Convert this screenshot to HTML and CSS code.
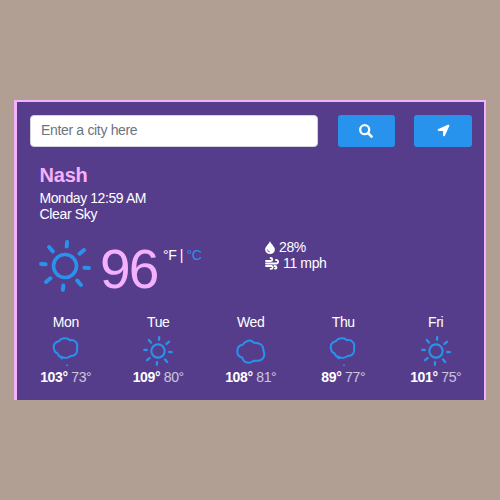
FILE: index.html
```html
<!DOCTYPE html>
<html lang="en">
<head>
<meta charset="utf-8">
<title>Weather</title>
<link rel="stylesheet" href="styles.css">
</head>
<body>
<svg width="0" height="0" class="defs">
  <symbol id="sun" viewBox="-26 -26 52 52">
    <g fill="none" stroke="currentColor" stroke-linecap="round" transform="rotate(5)">
      <circle r="11.500" stroke-width="3.600"/>
      <path stroke-width="4" d="M0-19.500V-24M0 19.500V24M19.500 0H24M-19.500 0H-24M13.500-13.500L17.500-17.500M13.500 13.500L17.500 17.500M-13.500 13.500L-17.500 17.500M-13.500-13.500L-17.500-17.500"/>
    </g>
  </symbol>
  <symbol id="rain" viewBox="0 0 30 30">
    <path fill="none" stroke="currentColor" stroke-width="2" stroke-linejoin="round" d="M2.700 11C2.700 8.500 4.300 6.200 7.700 5.300C10 2.300 16 .8 19 4.300C23.300 3.300 27.500 7 26 12C27 16 25 20 19.700 20C17.500 22 13.500 22.300 10.700 21C8.500 20.900 7 19 6.600 17.500C4 16.300 2.700 14 2.700 11Z"/>
    <path fill="currentColor" d="M8 20L12.500 21.700L10.500 23.700ZM16 27.800L17.200 30H14.800Z"/>
  </symbol>
  <symbol id="cloud" viewBox="0 0 30 30">
    <path fill="none" stroke="currentColor" stroke-width="2" stroke-linejoin="round" d="M1.300 15.300C1.300 12 3.300 9.200 6.700 8.700C9.500 4.500 14.500 3 17.700 6.700C23.500 6.200 28 9.300 27.300 14.300C29.700 19 27.500 24.700 21.700 24.700C20.500 25 19 24.400 17.300 25C14 27.300 10.500 27 8.300 25.300C6.900 24.600 7.300 22.500 5.800 21.400C2.500 20.800 1.300 18 1.300 15.300Z"/>
  </symbol>
</svg>
<main class="card">
  <form class="search">
    <input class="city-input" type="text" placeholder="Enter a city here" aria-label="City">
    <button class="btn" type="button" aria-label="Search"><svg width="14" height="14" viewBox="0 0 14 14"><circle cx="5.700" cy="5.700" r="4.500" fill="none" stroke="#fff" stroke-width="2.300"/><path d="M9 9L12.600 12.600" stroke="#fff" stroke-width="2.600" stroke-linecap="round"/></svg></button>
    <button class="btn btn-location" type="button" aria-label="Current location"><svg width="13" height="13" viewBox="0 0 13 13"><path fill="#fff" d="M11 .8Q12.700.3 12.300 1.900L8 11.600Q7.300 12.900 6.100 11.700V7H1.400Q-.2 5.800 1.300 5Z"/></svg></button>
  </form>
  <section class="summary">
    <h1>Nash</h1>
    <div class="date">Monday 12:59 AM</div>
    <div>Clear Sky</div>
  </section>
  <section class="current">
    <svg class="main-icon"><use href="#sun"/></svg>
    <span class="temp">96</span>
    <span class="units">°F | <span class="unit-link">°C</span></span>
    <div class="details">
      <div><svg width="10" height="13" viewBox="0 0 10 13"><path fill="#fff" d="M5 0C5.500 2.700 9.900 5.500 9.900 8.400A4.900 4.600 0 0 1 .1 8.400C.1 5.500 4.500 2.700 5 0Z"/><path d="M2.300 8.500Q2.600 10.700 4.900 11" fill="none" stroke="#563d8c" stroke-width=".8"/></svg><span>28%</span></div>
      <div><svg width="14" height="13" viewBox="0 0 14 13"><path fill="none" stroke="#fff" stroke-width="1.800" stroke-linecap="round" d="M1 4H5.500C8 4 7.700 1 5.600 1M1 6.500H11C14 6.500 13.600 2.700 10.900 3M1 9H6C8.500 9 8 12.200 5.600 11.900M9.500 9C12 9 12 11.800 10 11.600"/></svg><span>11 mph</span></div>
    </div>
  </section>
  <section class="forecast">
    <div class="day"><div>Mon</div><svg><use href="#rain"/></svg><div><b>103°</b> <span class="low">73°</span></div></div>
    <div class="day"><div>Tue</div><svg><use href="#sun"/></svg><div><b>109°</b> <span class="low">80°</span></div></div>
    <div class="day"><div>Wed</div><svg><use href="#cloud"/></svg><div><b>108°</b> <span class="low">81°</span></div></div>
    <div class="day"><div>Thu</div><svg><use href="#rain"/></svg><div><b>89°</b> <span class="low">77°</span></div></div>
    <div class="day"><div>Fri</div><svg><use href="#sun"/></svg><div><b>101°</b> <span class="low">75°</span></div></div>
  </section>
</main>
</body>
</html>
```
FILE: styles.css
```css
* { box-sizing: border-box; }
body {
  margin: 0;
  height: 500px;
  padding: 100px 14px 0;
  overflow: hidden;
  background: #b29f93;
  color: #fff;
  font: 14px/16px "Liberation Sans", Arial, sans-serif;
  letter-spacing: -0.35px;
}
.defs { display: block; position: absolute; }
.card {
  height: 300px;
  padding: 13px 12px 0 13px;
  background: #563d8c;
  border: solid #f5b0ff;
  border-width: 2px 2px 0 3px;
}
.search { display: flex; height: 31.500px; }
.city-input {
  width: 289px;
  height: 31.500px;
  padding: 0 10px 1px;
  border: 1px solid #ced4da;
  border-radius: 4px;
  background: #fff;
  font: inherit;
  letter-spacing: -0.33px;
}
.city-input::placeholder { color: #6c757d; opacity: 1; }
.btn {
  display: flex;
  align-items: center;
  justify-content: center;
  width: 57px;
  height: 31.500px;
  margin-left: 19.5px;
  padding: 0;
  border: 0;
  border-radius: 3px;
  background: #2793ed;
}
.btn-location { width: 58px; }
.summary { padding: 16.500px 0 0 9.500px; }
h1 { margin: 0 0 3px; font-size: 20px; line-height: 24px; letter-spacing: -0.2px; color: #f5b0ff; }
.date { letter-spacing: -0.42px; }
.current { display: flex; height: 58px; margin-top: 16px; padding-left: 9px; }
.main-icon { width: 52px; height: 52px; margin-top: 1.500px; color: #2793ed; }
.temp { width: 57px; margin-left: 9px; font-size: 55px; line-height: 63px; letter-spacing: -1.8px; color: #f5b0ff; }
.units { width: 97px; margin: 9px 0 0 6px; letter-spacing: -0.4px; }
.unit-link { color: #2793ed; }
.details { margin: 1px 0 0 5px; }
.details div { display: flex; align-items: center; gap: 4px; }
.forecast { display: grid; grid-template-columns: repeat(5, 92.5px); margin: 18px 0 0 -10.500px; }
.day { display: flex; flex-direction: column; align-items: center; white-space: nowrap; }
.day svg { width: 30px; height: 30px; margin: 6px 0 3px; color: #2793ed; }
.low { opacity: .7; }
```
